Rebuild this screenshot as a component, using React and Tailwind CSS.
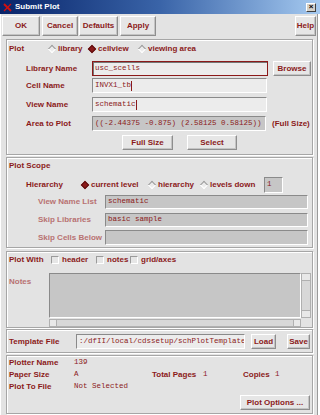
import React from 'react';

const red = 'text-[#8b1a1a]';

const Label = ({ children, className = '', dim }) => (
  <span className={`text-[8px] font-bold leading-none whitespace-nowrap ${dim ? 'text-[#b87272]' : red} ${className}`}>
    {children}
  </span>
);

const Mono = ({ children, className = '' }) => (
  <span className={`font-['Liberation_Mono',monospace] text-[7.5px] leading-none whitespace-nowrap ${red} ${className}`}>
    {children}
  </span>
);

const Btn = ({ children, className = '' }) => (
  <div className={`flex items-center justify-center bg-[#e6e6e6] border border-t-white border-l-white border-r-[#8e8e8e] border-b-[#8e8e8e] shadow-[inset_-1px_-1px_0_#c4c4c4] ${className}`}>
    <Label>{children}</Label>
  </div>
);

const Field = ({ children, className = '', gray, focus }) => (
  <div
    className={`flex items-center px-[2px] overflow-hidden border ${
      focus ? 'border-[#8b1a1a] shadow-[inset_1px_1px_0_#777]' : 'border-t-[#8a8a8a] border-l-[#8a8a8a] border-r-white border-b-white'
    } ${gray ? 'bg-[#c6c6c6]' : 'bg-[#ececec]'} ${className}`}
  >
    {children}
  </div>
);

const Diamond = ({ on }) => (
  <span className="w-[9px] h-[9px] flex items-center justify-center shrink-0">
    <span
      className={`w-[6px] h-[6px] rotate-45 border ${
        on ? 'bg-[#8b1a1a] border-[#5e0f0f]' : 'bg-[#ececec] border-t-[#9a9a9a] border-l-[#9a9a9a] border-r-white border-b-white'
      }`}
    />
  </span>
);

const Radio = ({ on, label, className = '' }) => (
  <div className={`flex items-center gap-[2px] ${className}`}>
    <Diamond on={on} />
    <Label>{label}</Label>
  </div>
);

const Check = ({ label, className = '' }) => (
  <div className={`flex items-center gap-[3px] ${className}`}>
    <span className="w-[8px] h-[8px] bg-[#e6e6e6] border border-t-[#9a9a9a] border-l-[#9a9a9a] border-r-white border-b-white" />
    <Label>{label}</Label>
  </div>
);

const Section = ({ children, className = '' }) => (
  <div className={`ml-[6px] w-[307px] border border-[#a6a6a6] shadow-[inset_1px_1px_0_#fff,1px_1px_0_#fff] flex flex-col ${className}`}>
    {children}
  </div>
);

export default function App() {
  return (
    <div className="w-[320px] h-[415px] bg-[#e3e3e3] overflow-hidden font-['Liberation_Sans',Arial,sans-serif] shadow-[inset_1px_0_0_#fff,inset_-2px_0_0_#fff,inset_-3px_0_0_#9a9a9a] flex flex-col">
      {/* Title bar */}
      <div className="h-[14px] flex items-center bg-linear-to-r from-[#0a246a] via-[#3a64a8] to-[#a6caf0]">
        <svg width="9" height="9" viewBox="0 0 9 9" className="ml-[3px]">
          <path d="M1 1 L8 8" stroke="#d01010" strokeWidth="2" />
          <path d="M8 1 L1 8" stroke="#d01010" strokeWidth="1.2" />
        </svg>
        <span className="ml-[3px] text-[8px] font-bold text-white leading-none">Submit Plot</span>
        <div className="ml-auto mr-[4px] w-[10px] h-[9px] bg-[#d4d0c8] border border-t-white border-l-white border-r-[#404040] border-b-[#404040] flex items-center justify-center">
          <span className="text-[8px] font-bold leading-none text-black">×</span>
        </div>
      </div>

      {/* Button row */}
      <div className="mt-[2px] h-[20px] flex pl-[2px]">
        <Btn className="w-[38px]">OK</Btn>
        <Btn className="w-[36px] ml-[2px]">Cancel</Btn>
        <Btn className="w-[39px] ml-[1px]">Defaults</Btn>
        <Btn className="w-[36px] ml-[2px]">Apply</Btn>
        <Btn className="w-[21px] ml-auto mr-[4px]">Help</Btn>
      </div>

      {/* Plot */}
      <Section className="mt-[3px] h-[116px]">
        <div className="mt-[3px] h-[12px] flex items-center pl-[2px]">
          <Label className="w-[38px]">Plot</Label>
          <Radio label="library" className="w-[40px]" />
          <Radio on label="cellview" className="w-[50px]" />
          <Radio label="viewing area" />
        </div>
        <div className="mt-[6px] h-[15px] flex items-center pl-[19px]">
          <Label className="w-[66px]">Library Name</Label>
          <Field focus className="w-[176px] h-[15px]"><Mono>usc_scells</Mono></Field>
          <Btn className="ml-[5px] w-[38px] h-[15px]">Browse</Btn>
        </div>
        <div className="mt-[2px] h-[15px] flex items-center pl-[19px]">
          <Label className="w-[66px]">Cell Name</Label>
          <Field className="w-[175px] h-[15px]"><Mono>INVX1_tb</Mono><span className="w-[1px] h-[10px] bg-[#8b1a1a]" /></Field>
        </div>
        <div className="mt-[4px] h-[15px] flex items-center pl-[19px]">
          <Label className="w-[66px]">View Name</Label>
          <Field className="w-[175px] h-[15px]"><Mono>schematic</Mono><span className="w-[1px] h-[10px] bg-[#8b1a1a]" /></Field>
        </div>
        <div className="mt-[4px] h-[15px] flex items-center pl-[19px]">
          <Label className="w-[66px]">Area to Plot</Label>
          <Field gray className="w-[174px] h-[15px]"><Mono>((-2.44375 -0.875) (2.58125 0.58125))</Mono></Field>
          <Label className="ml-[6px]">(Full Size)</Label>
        </div>
        <div className="mt-[4px] h-[15px] flex pl-[115px]">
          <Btn className="w-[51px] h-[15px]">Full Size</Btn>
          <Btn className="w-[50px] h-[15px] ml-[14px]">Select</Btn>
        </div>
      </Section>

      {/* Plot Scope */}
      <Section className="mt-[2px] h-[91px]">
        <div className="mt-[3px] h-[10px] flex items-center pl-[2px]">
          <Label>Plot Scope</Label>
        </div>
        <div className="mt-[6px] h-[16px] flex items-center pl-[19px]">
          <Label className="w-[54px]">Hierarchy</Label>
          <Radio on label="current level" className="w-[67px]" />
          <Radio label="hierarchy" className="w-[52px]" />
          <Radio label="levels down" className="w-[65px]" />
          <Field gray className="w-[19px] h-[16px] items-start pt-[3px]"><Mono>1</Mono></Field>
        </div>
        <div className="mt-[2px] h-[14px] flex items-center pl-[31px]">
          <Label dim className="w-[67px]">View Name List</Label>
          <Field gray className="w-[203px] h-[14px]"><Mono>schematic</Mono></Field>
        </div>
        <div className="mt-[4px] h-[14px] flex items-center pl-[31px]">
          <Label dim className="w-[67px]">Skip Libraries</Label>
          <Field gray className="w-[203px] h-[14px]"><Mono>basic sample</Mono></Field>
        </div>
        <div className="mt-[3px] h-[15px] flex items-center pl-[31px]">
          <Label dim className="w-[67px]">Skip Cells Below</Label>
          <Field gray className="w-[203px] h-[15px]" />
        </div>
      </Section>

      {/* Plot With */}
      <Section className="mt-[3px] h-[77px]">
        <div className="mt-[3px] h-[10px] flex items-center pl-[2px]">
          <Label className="w-[42px]">Plot With</Label>
          <Check label="header" className="w-[45px]" />
          <Check label="notes" className="w-[34px]" />
          <Check label="grid/axes" />
        </div>
        <div className="mt-[8px] flex pl-[2px]">
          <Label dim className="w-[40px] mt-[5px]">Notes</Label>
          <div className="flex flex-col">
            <div className="flex">
              <div className="w-[252px] h-[45px] bg-[#c6c6c6] border border-t-[#8a8a8a] border-l-[#8a8a8a] border-r-white border-b-white" />
              <div className="w-[10px] h-[45px] bg-[#d8d8d8] border border-[#b0b0b0] flex flex-col justify-between">
                <span className="h-[7px] bg-[#e8e8e8] border-b border-[#b0b0b0]" />
                <span className="h-[7px] bg-[#e8e8e8] border-t border-[#b0b0b0]" />
              </div>
            </div>
            <div className="mt-[1px] w-[252px] h-[8px] bg-[#d8d8d8] border border-[#b0b0b0] flex justify-between">
              <span className="w-[7px] bg-[#e8e8e8] border-r border-[#b0b0b0]" />
              <span className="w-[7px] bg-[#e8e8e8] border-l border-[#b0b0b0]" />
            </div>
          </div>
        </div>
      </Section>

      {/* Template File */}
      <Section className="mt-[1px] h-[24px]">
        <div className="mt-[4px] h-[15px] flex items-center pl-[2px]">
          <Label className="w-[67px]">Template File</Label>
          <Field className="w-[169px] h-[15px]"><Mono>:/dfII/local/cdssetup/schPlotTemplate</Mono></Field>
          <Btn className="ml-[6px] w-[25px] h-[15px]">Load</Btn>
          <Btn className="ml-[11px] w-[23px] h-[15px]">Save</Btn>
        </div>
      </Section>

      {/* Plotter info */}
      <Section className="mt-[2px] h-[59px]">
        <div className="mt-[1px] h-[12px] flex items-center pl-[2px]">
          <Label className="w-[65px]">Plotter Name</Label>
          <Mono>139</Mono>
        </div>
        <div className="h-[12px] flex items-center pl-[2px]">
          <Label className="w-[65px]">Paper Size</Label>
          <Mono className="w-[78px]">A</Mono>
          <Label className="w-[51px]">Total Pages</Label>
          <Mono className="w-[40px]">1</Mono>
          <Label className="w-[32px]">Copies</Label>
          <Mono>1</Mono>
        </div>
        <div className="h-[12px] flex items-center pl-[2px]">
          <Label className="w-[65px]">Plot To File</Label>
          <Mono>Not Selected</Mono>
        </div>
        <div className="mt-[2px] flex justify-end pr-[2px]">
          <Btn className="w-[70px] h-[15px]">Plot Options ...</Btn>
        </div>
      </Section>
    </div>
  );
}
